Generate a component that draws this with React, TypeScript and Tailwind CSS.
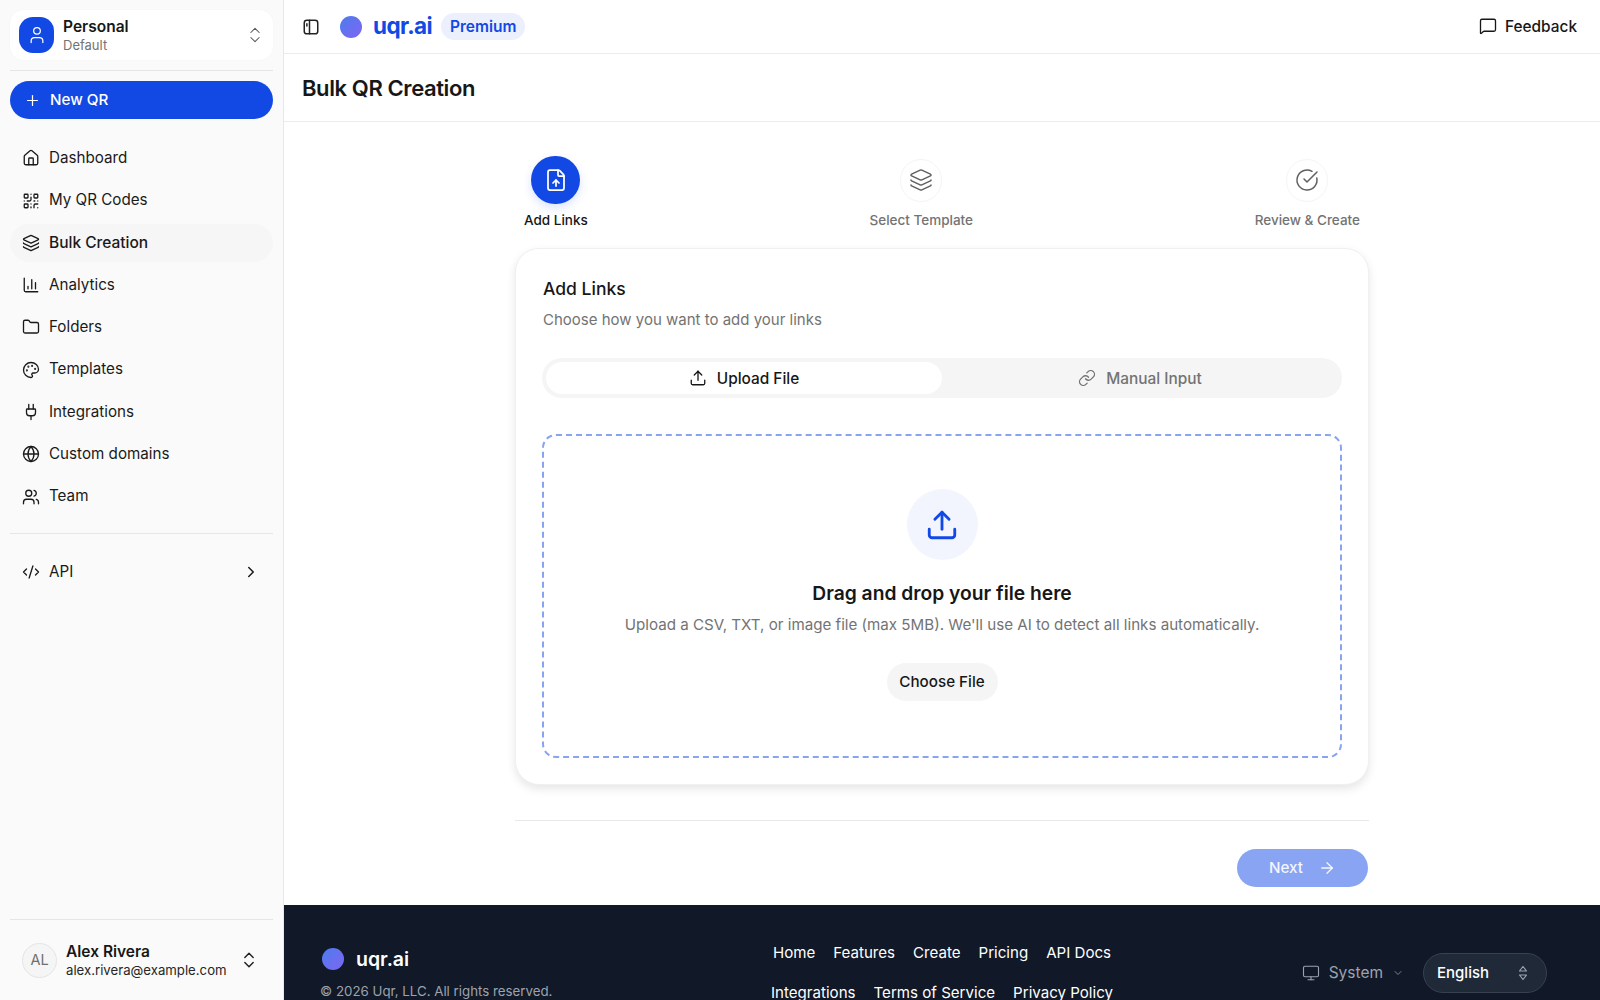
import React from "react";
import {
  User, ChevronsUpDown, Plus, House, QrCode, Layers, ChartColumn, Folder, Palette, Plug, Globe, Users,
  CodeXml, ChevronRight, MessageSquare, FileUp, CircleCheckBig, Upload, Link, ArrowRight, Monitor, ChevronDown,
} from "lucide-react";

const nav = [
  { label: "Dashboard", icon: House },
  { label: "My QR Codes", icon: QrCode },
  { label: "Bulk Creation", icon: Layers, active: true },
  { label: "Analytics", icon: ChartColumn },
  { label: "Folders", icon: Folder },
  { label: "Templates", icon: Palette },
  { label: "Integrations", icon: Plug },
  { label: "Custom domains", icon: Globe },
  { label: "Team", icon: Users },
];

function Dot({ className }: { className: string }) {
  return <span className={"block rounded-full bg-gradient-to-br from-[#4a7bee] to-[#7b66f2] " + className} />;
}

function Sidebar() {
  return (
    <aside className="w-[284px] h-full shrink-0 flex flex-col bg-[#fafafa] border-r border-[#e8e8e8] px-[10px] pt-[10px]">
      <div className="h-[50px] rounded-[14px] bg-white shadow-[0_0_2px_rgba(0,0,0,0.04)] flex items-center px-[9px]">
        <span className="w-[35px] h-[36px] rounded-[14px] bg-[#1249e5] flex items-center justify-center text-white">
          <User size={20} strokeWidth={1.5} />
        </span>
        <div className="ml-[9px] flex-1 pt-[2px]">
          <div className="text-[15.5px] font-semibold text-[#171717] leading-[18px]">Personal</div>
          <div className="text-[13px] text-[#737373] leading-[18px]">Default</div>
        </div>
        <ChevronsUpDown size={20} strokeWidth={1.25} className="text-[#555] mr-[-1px]" />
      </div>
      <div className="h-px bg-[#e6e6e6] mt-[10px]" />
      <button className="mt-[10px] h-[38px] rounded-full bg-[#1249e5] text-white flex items-center px-[14px] text-[15.2px] font-medium">
        <Plus size={17} strokeWidth={1.75} />
        <span className="ml-[9px] pt-[1.5px]">New QR</span>
      </button>
      <nav className="mt-[20.3px] flex flex-col gap-[4.3px]">
        {nav.map((n) => (
          <div key={n.label} className={"h-[38px] rounded-full flex items-center px-[12px] text-[#1a1a1a] " + (n.active ? "bg-[#f6f6f6] font-medium text-[15.5px]" : "text-[15.2px]")}>
            <n.icon size={18} strokeWidth={1.75} className="shrink-0" />
            <span className="ml-[9px]">{n.label}</span>
          </div>
        ))}
      </nav>
      <div className="h-px bg-[#e6e6e6] mt-[17.7px]" />
      <div className="mt-[19px] h-[38px] flex items-center px-[12px] text-[15.2px] text-[#1a1a1a]">
        <CodeXml size={18} strokeWidth={1.75} className="shrink-0" />
        <span className="ml-[9px] flex-1">API</span>
        <ChevronRight size={18} strokeWidth={2} className="mr-[1px]" />
      </div>
      <div className="mt-auto h-px bg-[#e6e6e6]" />
      <div className="h-[80px] flex items-center px-[12px]">
        <span className="w-[35px] h-[35px] rounded-full bg-[#f5f5f5] border border-[#e5e5e5] flex items-center justify-center text-[14.5px] text-[#6f6f6f]">AL</span>
        <div className="ml-[9px] flex-1 pt-[1px]">
          <div className="text-[15.5px] font-semibold text-[#171717] leading-[18px]">Alex Rivera</div>
          <div className="text-[13.2px] text-[#262626] leading-[18px]">alex.rivera@example.com</div>
        </div>
        <ChevronsUpDown size={20} strokeWidth={1.75} className="text-[#222] mr-[2px]" />
      </div>
    </aside>
  );
}

function Header() {
  return (
    <header className="h-[54px] shrink-0 border-b border-[#ececec] flex items-center pl-[18px] pr-[23px]">
      <svg width="18" height="18" viewBox="0 0 24 24" fill="none" stroke="#222" strokeWidth="2" strokeLinecap="round" strokeLinejoin="round">
        <rect x="3" y="3" width="18" height="18" rx="3.5" />
        <path d="M10 3v18" />
        <path d="M6.5 7.5v3" />
      </svg>
      <Dot className="ml-[20px] w-[22px] h-[22px]" />
      <span className="ml-[11px] text-[22.5px] font-bold text-[#1249e5] tracking-[-0.6px] leading-none">uqr.ai</span>
      <span className="ml-[9px] h-[27px] px-[9px] pt-[1px] rounded-full bg-[#ecf0fd] text-[#1249e5] text-[15.5px] font-semibold flex items-center">Premium</span>
      <div className="ml-auto flex items-center text-[15.4px] font-medium text-[#171717]">
        <MessageSquare size={18} strokeWidth={1.75} />
        <span className="ml-[8px]">Feedback</span>
      </div>
    </header>
  );
}

function Step({ icon: Icon, label, active }: { icon: any; label: string; active?: boolean }) {
  return (
    <div className="flex flex-col items-center h-[80px]">
      <div className="h-[48px] flex items-center justify-center">
        {active ? (
          <span className="w-[49px] h-[48px] rounded-full bg-[#1249e5] text-white flex items-center justify-center shadow-[0_4px_10px_rgba(18,73,229,0.15)]">
            <Icon size={24} strokeWidth={1.75} />
          </span>
        ) : (
          <span className="w-[42px] h-[43px] rounded-full bg-white border border-[#f5f5f5] text-[#5f5f5f] flex items-center justify-center">
            <Icon size={24} strokeWidth={1.5} />
          </span>
        )}
      </div>
      <span className={"mt-[6px] text-[13.5px] font-medium " + (active ? "text-[#171717]" : "text-[#737373]")}>{label}</span>
    </div>
  );
}

function Card() {
  return (
    <div className="h-[537px] rounded-[24px] border border-[#f0f0f0] bg-white shadow-[0_4px_10px_rgba(0,0,0,0.1)] px-[26px] pt-[26px]">
      <div className="pl-[1px] text-[17.5px] font-medium text-[#171717] leading-[28px]">Add Links</div>
      <div className="pl-[1px] text-[15px] text-[#737373] leading-[22px] mt-[6px]">Choose how you want to add your links</div>
      <div className="mt-[27px] h-[40px] rounded-full bg-[#f5f5f5] p-[4px] flex">
        <div className="flex-1 rounded-full bg-white flex items-center justify-center text-[15.4px] font-medium text-[#171717]">
          <Upload size={18} strokeWidth={1.75} />
          <span className="ml-[10px] pt-[1px]">Upload File</span>
        </div>
        <div className="flex-1 flex items-center justify-center text-[15.4px] font-medium text-[#737373]">
          <Link size={18} strokeWidth={1.75} />
          <span className="ml-[10px] pt-[1px]">Manual Input</span>
        </div>
      </div>
      <div className="mt-[36px] h-[324px] rounded-[14px] border-2 border-dashed border-[#88a4f0] flex flex-col items-center pt-[53px]">
        <span className="w-[71px] h-[71px] rounded-full bg-[#f2f5fe] text-[#1249e5] flex items-center justify-center">
          <Upload size={34} strokeWidth={2} />
        </span>
        <div className="mt-[19px] text-[19.25px] font-semibold text-[#171717] leading-[28px]">Drag and drop your file here</div>
        <div className="mt-[6px] text-[15.15px] text-[#737373] leading-[24px]">Upload a CSV, TXT, or image file (max 5MB). We'll use AI to detect all links automatically.</div>
        <button className="mt-[26px] h-[38px] w-[111px] rounded-full bg-[#f5f5f5] text-[15.2px] font-medium text-[#171717]">Choose File</button>
      </div>
    </div>
  );
}

function Footer() {
  return (
    <footer className="shrink-0 h-[95px] bg-[#111827] pt-[28px] pl-[36px] pr-[53px] flex">
      <div className="w-[438px] shrink-0 pt-[11px]">
        <div className="flex items-center pl-[2px]">
          <Dot className="w-[22px] h-[22px]" />
          <span className="ml-[12px] text-[19.5px] font-semibold text-white leading-[30px]">uqr.ai</span>
        </div>
        <div className="mt-[9px] text-[13.3px] text-[#9ca3af] leading-[16px]">© 2026 Uqr, LLC. All rights reserved.</div>
      </div>
      <div className="w-[368px] shrink-0 flex flex-col items-center gap-[24px] text-[15.1px] text-white leading-[16px] pt-[12px] whitespace-nowrap">
        <div className="flex gap-[18px]">
          <span>Home</span><span>Features</span><span>Create</span><span>Pricing</span><span>API Docs</span>
        </div>
        <div className="flex gap-[18px]">
          <span>Integrations</span><span>Terms of Service</span><span>Privacy Policy</span>
        </div>
      </div>
      <div className="ml-auto flex items-start pt-[20px]">
        <div className="flex items-center h-[40px] text-[15.5px] text-[#9ca3af]">
          <Monitor size={18} strokeWidth={1.5} />
          <span className="ml-[9px]">System</span>
          <ChevronDown size={12} strokeWidth={1.5} className="ml-[9px]" />
        </div>
        <div className="ml-[19px] w-[124px] h-[40px] rounded-full bg-[#1f2937] border border-[#374151] flex items-center pl-[13px] pr-[18px] text-[15px] font-medium text-white">
          <span className="flex-1">English</span>
          <svg width="10" height="16" viewBox="0 0 10 16" fill="none" stroke="#9ca3af" strokeWidth="1.2" strokeLinejoin="round">
            <path d="M5 1.5 8.5 6h-7z" />
            <path d="M5 14.5 1.5 10h7z" />
          </svg>
        </div>
      </div>
    </footer>
  );
}

export default function App() {
  return (
    <div className="w-full h-screen overflow-hidden flex bg-white font-['Inter',sans-serif]">
      <Sidebar />
      <div className="flex-1 min-w-0 h-full flex flex-col overflow-hidden">
        <Header />
        <div className="h-[68px] shrink-0 border-b border-[#ececec] flex items-center pl-[18px] pt-[1px]">
          <h1 className="text-[22px] font-semibold text-[#171717] tracking-[-0.4px]">Bulk QR Creation</h1>
        </div>
        <main className="h-[783px] shrink-0 pt-[34px]">
          <div className="w-[854px] mx-auto">
            <div className="flex justify-between px-[9px]">
              <Step icon={FileUp} label="Add Links" active />
              <Step icon={Layers} label="Select Template" />
              <Step icon={CircleCheckBig} label="Review & Create" />
            </div>
            <div className="mt-[12px]"><Card /></div>
            <div className="mt-[35px] h-px bg-[#e8e8e8]" />
            <div className="mt-[28px] flex justify-end">
              <button className="w-[131px] h-[38px] mr-[1px] rounded-full bg-[#88a4f2] text-white/90 text-[15.2px] font-medium flex items-center justify-center">
                Next
                <ArrowRight size={18} strokeWidth={1.75} className="ml-[15px]" />
              </button>
            </div>
          </div>
        </main>
        <Footer />
      </div>
    </div>
  );
}
